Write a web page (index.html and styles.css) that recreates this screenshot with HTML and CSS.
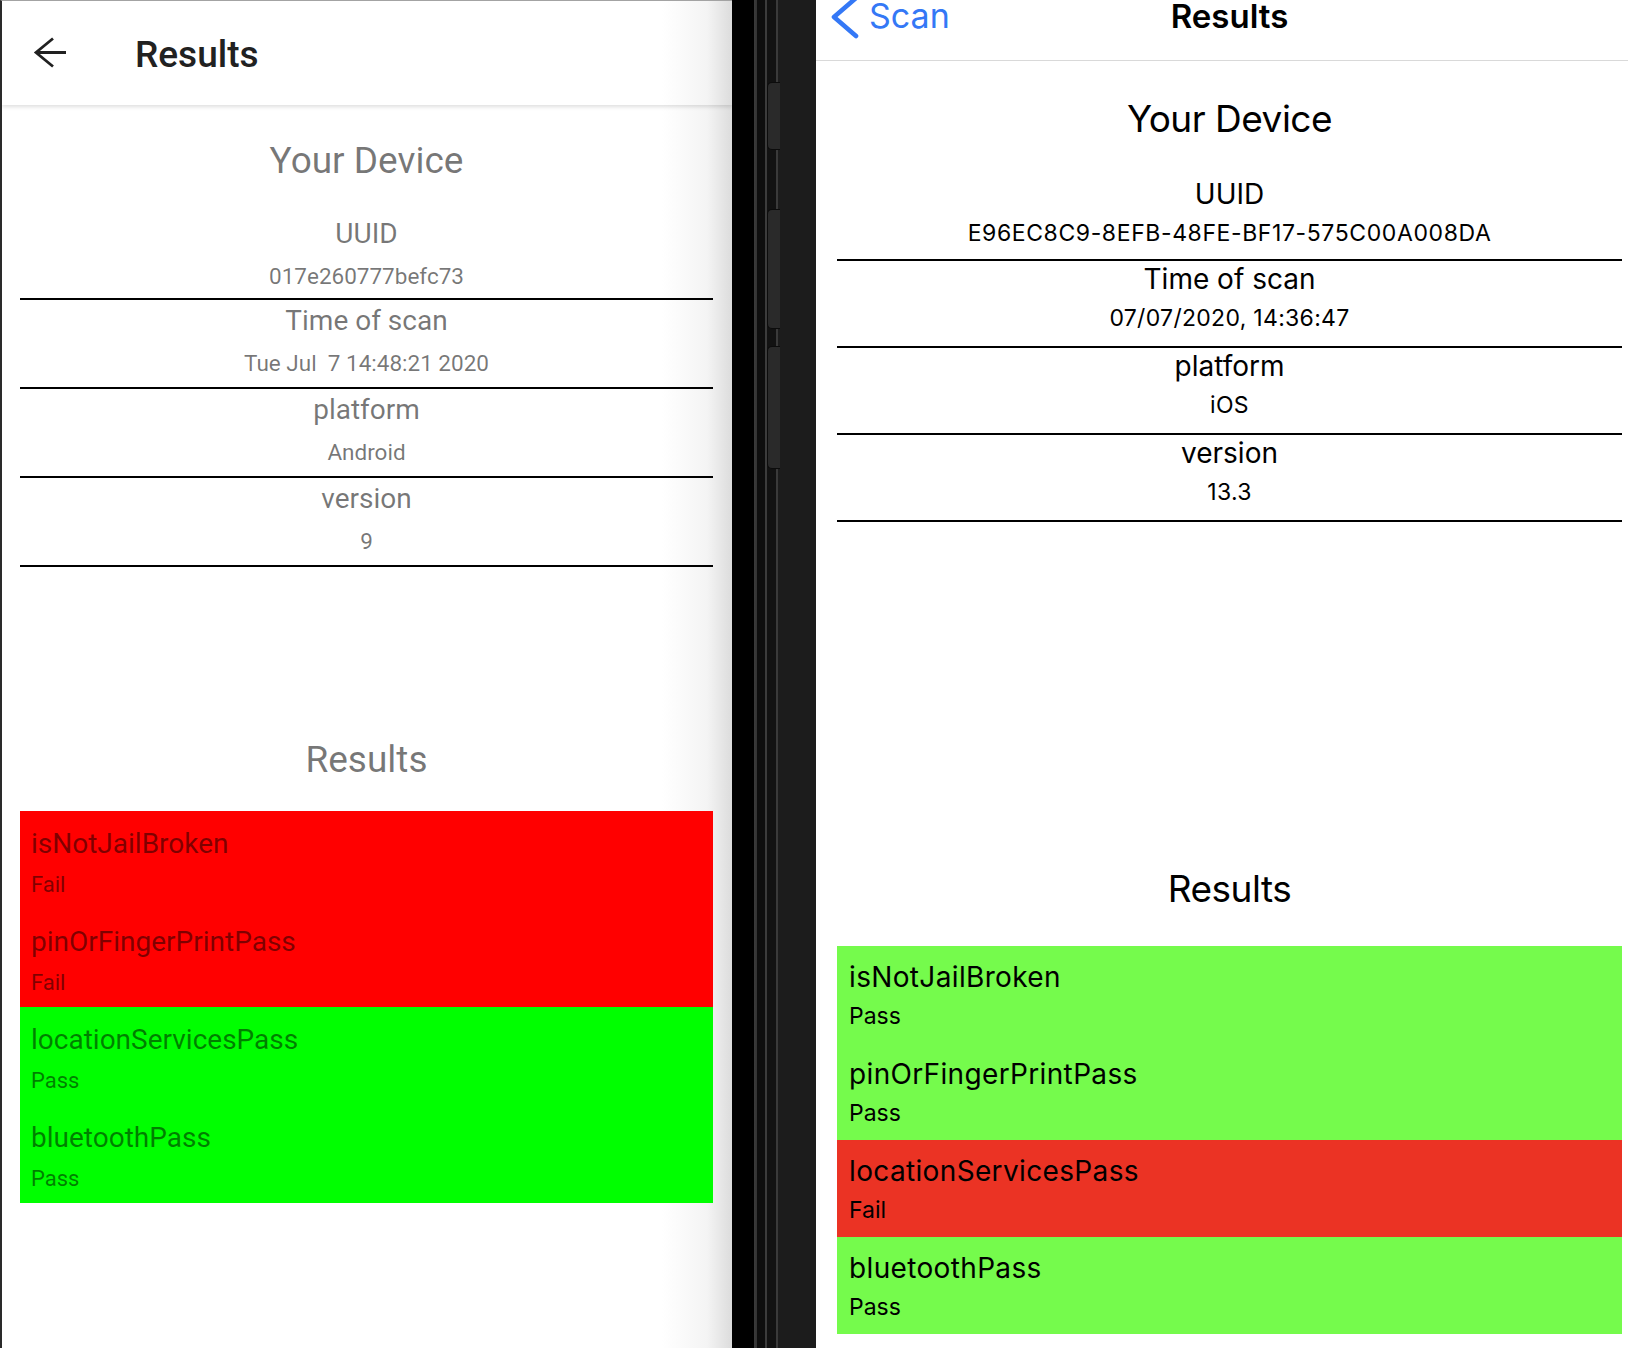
FILE: index.html
```html
<!DOCTYPE html>
<html lang="en">
<head>
<meta charset="utf-8">
<title>Results</title>
<link rel="stylesheet" href="styles.css">
</head>
<body>
<div class="screen android">
  <header class="appbar">
    <svg class="back-arrow" width="45" height="45" viewBox="0 0 45 45" aria-hidden="true">
      <path d="M25 8.5 L8 22.5 L25 36.5 M8.5 22.5 H38" fill="none" stroke="#212121" stroke-width="2.8"/>
    </svg>
    <h1 class="appbar-title">Results</h1>
  </header>
  <main class="content">
    <h2 class="section-title">Your Device</h2>
    <div class="info-list">
      <div class="info"><div class="info-label">UUID</div><div class="info-value">017e260777befc73</div></div>
      <div class="info"><div class="info-label">Time of scan</div><div class="info-value">Tue Jul  7 14:48:21 2020</div></div>
      <div class="info"><div class="info-label">platform</div><div class="info-value">Android</div></div>
      <div class="info"><div class="info-label">version</div><div class="info-value">9</div></div>
    </div>
    <h2 class="section-title results-title">Results</h2>
    <div class="result-list">
      <div class="result fail"><div class="result-name">isNotJailBroken</div><div class="result-status">Fail</div></div>
      <div class="result fail"><div class="result-name">pinOrFingerPrintPass</div><div class="result-status">Fail</div></div>
      <div class="result pass"><div class="result-name">locationServicesPass</div><div class="result-status">Pass</div></div>
      <div class="result pass"><div class="result-name">bluetoothPass</div><div class="result-status">Pass</div></div>
    </div>
  </main>
</div>

<div class="bezel">
  <div class="side-button btn-1"></div>
  <div class="side-button btn-2"></div>
  <div class="side-button btn-3"></div>
</div>

<div class="screen ios">
  <header class="navbar">
    <div class="nav-back">
      <svg class="chevron" width="32" height="42" viewBox="0 0 32 42" aria-hidden="true">
        <polyline points="27,1 5,20 27,39" fill="none" stroke="#3478f6" stroke-width="4.6" stroke-linecap="round" stroke-linejoin="round"/>
      </svg>
      <span class="nav-back-label">Scan</span>
    </div>
    <h1 class="nav-title">Results</h1>
    <div class="nav-spacer"></div>
  </header>
  <main class="content">
    <h2 class="section-title">Your Device</h2>
    <div class="info-list">
      <div class="info"><div class="info-label">UUID</div><div class="info-value uuid">E96EC8C9-8EFB-48FE-BF17-575C00A008DA</div></div>
      <div class="info"><div class="info-label">Time of scan</div><div class="info-value">07/07/2020, 14:36:47</div></div>
      <div class="info"><div class="info-label">platform</div><div class="info-value">iOS</div></div>
      <div class="info"><div class="info-label">version</div><div class="info-value">13.3</div></div>
    </div>
    <h2 class="section-title results-title">Results</h2>
    <div class="result-list">
      <div class="result pass"><div class="result-name">isNotJailBroken</div><div class="result-status">Pass</div></div>
      <div class="result pass"><div class="result-name">pinOrFingerPrintPass</div><div class="result-status">Pass</div></div>
      <div class="result fail"><div class="result-name">locationServicesPass</div><div class="result-status">Fail</div></div>
      <div class="result pass"><div class="result-name">bluetoothPass</div><div class="result-status">Pass</div></div>
    </div>
  </main>
</div>
</body>
</html>
```

FILE: styles.css
```css
* {
  box-sizing: border-box;
}

html, body {
  margin: 0;
  padding: 0;
}

body {
  width: 1628px;
  height: 1348px;
  overflow: hidden;
  display: flex;
  background: #000;
}

h1, h2 {
  margin: 0;
  font-weight: normal;
}

.screen {
  height: 1348px;
  display: flex;
  flex-direction: column;
  overflow: hidden;
}

/* ---------- Android ---------- */

.android {
  width: 732px;
  flex: none;
  border-left: 2px solid #2a2a2a;
  border-top: 1px solid #a3a3a3;
  font-family: Roboto, "Noto Sans", sans-serif;
  background: linear-gradient(to right, #ffffff 0, #ffffff 660px, #f4f4f4 705px, #dcdcdc 730px);
}

.android .appbar {
  height: 104px;
  flex: none;
  display: flex;
  align-items: flex-start;
  position: relative;
  z-index: 1;
  background: linear-gradient(to right, #ffffff 0, #ffffff 660px, #f4f4f4 705px, #dcdcdc 730px);
  box-shadow: 0 2px 4px rgba(0, 0, 0, 0.13);
}

.android .back-arrow {
  margin-top: 29px;
  margin-left: 26px;
  flex: none;
}

.android .appbar-title {
  margin-top: 32px;
  margin-left: 62px;
  font-size: 37px;
  line-height: 44px;
  font-weight: 500;
  color: #212121;
}

.android .content {
  padding: 0 19px 0 18px;
  text-align: center;
  color: rgba(0, 0, 0, 0.54);
}

.android .section-title {
  font-size: 37px;
  line-height: 50px;
  margin-top: 31px;
  margin-bottom: 27px;
}

.android .results-title {
  margin-top: 168px;
  margin-bottom: 26px;
}

.android .info {
  border-bottom: 2px solid #000;
  padding-bottom: 2px;
}

.android .info:first-child {
  padding-bottom: 0;
}

.android .info-label {
  font-size: 28px;
  line-height: 42px;
}

.android .info-value {
  font-size: 22.5px;
  line-height: 43px;
  white-space: pre;
}

.android .result {
  text-align: left;
  padding: 11px 11px 4px;
  color: rgba(0, 0, 0, 0.5);
}

.android .result.fail {
  background: #ff0000;
}

.android .result.pass {
  background: #00ff00;
}

.android .result-name {
  font-size: 28px;
  line-height: 43px;
}

.android .result-status {
  font-size: 22px;
  line-height: 40px;
}

/* ---------- device bezel ---------- */

.bezel {
  width: 84px;
  height: 1348px;
  flex: none;
  display: flex;
  flex-direction: column;
  align-items: flex-start;
  background: linear-gradient(to right,
    #000000 0, #000000 22px,
    #3a3a3a 22px, #333333 25px,
    #0e0e0e 25px, #0e0e0e 33px,
    #3c3c3c 33px, #3c3c3c 35px,
    #121212 35px, #121212 44px,
    #3a3a3a 44px, #3a3a3a 46px,
    #1c1c1c 46px, #1c1c1c 84px);
}

.side-button {
  width: 13px;
  margin-left: 35px;
  background: #2a2a2a;
  border: 1px solid #0c0c0c;
  border-right: none;
  border-radius: 5px 0 0 5px;
}

.btn-1 {
  margin-top: 82px;
  height: 68px;
}

.btn-2 {
  margin-top: 59px;
  height: 120px;
}

.btn-3 {
  margin-top: 17px;
  height: 123px;
}

/* ---------- iOS ---------- */

.ios {
  width: 812px;
  flex: none;
  background: #ffffff;
  font-family: Inter, "Noto Sans", sans-serif;
  color: #000;
}

.ios .navbar {
  height: 61px;
  flex: none;
  display: grid;
  grid-template-columns: 1fr auto 1fr;
  align-items: start;
  padding: 0 6px 0 21px;
  border-bottom: 1px solid #d9d9d9;
  background: #ffffff;
}

.ios .nav-back {
  display: flex;
  align-items: flex-start;
  margin-left: -8px;
}

.ios .chevron {
  flex: none;
  margin-top: -3px;
  overflow: visible;
}

.ios .nav-back-label {
  margin-left: 8px;
  font-size: 34px;
  line-height: 32px;
  color: #3478f6;
}

.ios .nav-title {
  font-size: 33px;
  line-height: 32px;
  font-weight: 600;
}

.ios .content {
  padding: 0 6px 0 21px;
  text-align: center;
}

.ios .section-title {
  font-size: 37px;
  line-height: 50px;
  letter-spacing: -0.5px;
  margin-top: 33px;
  margin-bottom: 32px;
}

.ios .results-title {
  margin-top: 342px;
  margin-bottom: 32px;
}

.ios .info {
  border-bottom: 2px solid #000;
  padding-bottom: 6px;
}

.ios .info:first-child {
  padding-bottom: 4px;
}

.ios .info-label {
  font-size: 28px;
  line-height: 36px;
}

.ios .info-value {
  font-size: 23px;
  line-height: 43px;
  letter-spacing: 0.3px;
}

.ios .info-value.uuid {
  letter-spacing: 0.6px;
}

.ios .result {
  text-align: left;
  padding: 13px 12px 5px;
}

.ios .result.pass {
  background: #75fb4c;
}

.ios .result.fail {
  background: #eb3324;
}

.ios .result-name {
  font-size: 28px;
  line-height: 36px;
  letter-spacing: 0.35px;
}

.ios .result-status {
  font-size: 23px;
  line-height: 43px;
}
```
